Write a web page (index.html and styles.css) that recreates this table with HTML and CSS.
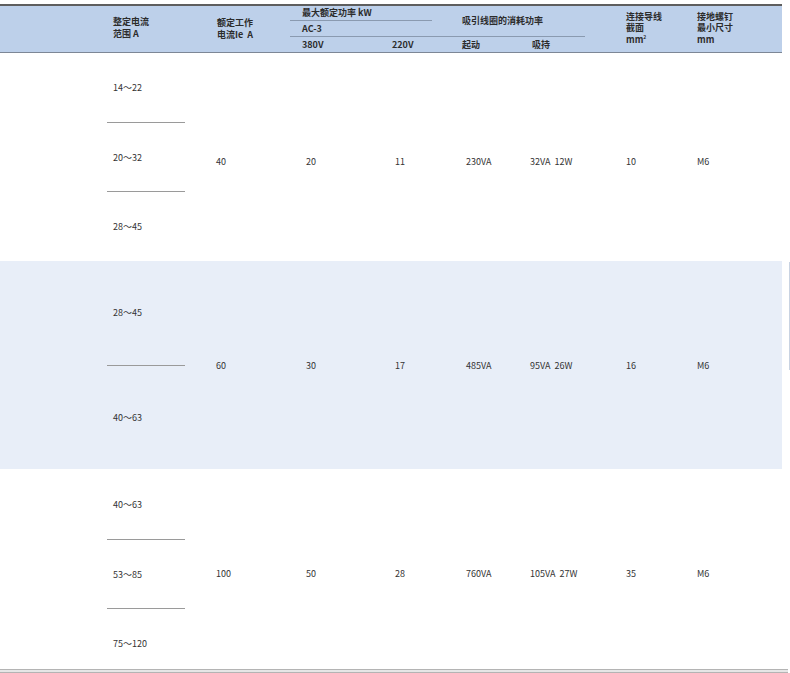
FILE: index.html
```html
<!DOCTYPE html>
<html lang="zh">
<head>
<meta charset="utf-8">
<link rel="stylesheet" href="styles.css">
</head>
<body>
<div class="page">
  <div class="thead">
    <div class="h h-c1">整定电流<br>范围 A</div>
    <div class="h h-c2">额定工作<br>电流Ie&nbsp; A</div>
    <div class="h h-kw">最大额定功率 kW</div>
    <div class="h h-ac">AC-3</div>
    <div class="h h-coil">吸引线圈的消耗功率</div>
    <div class="h h-380">380V</div>
    <div class="h h-220">220V</div>
    <div class="h h-qd">起动</div>
    <div class="h h-xc">吸持</div>
    <div class="h h-c7">连接导线<br>截面<br>mm<sup>2</sup></div>
    <div class="h h-c8">接地螺钉<br>最小尺寸<br>mm</div>
  </div>

  <div class="band band1">
    <div class="ranges">
      <div class="rg">14～22</div>
      <div class="rg">20～32</div>
      <div class="rg">28～45</div>
    </div>
    <div class="c c2">40</div>
    <div class="c c3">20</div>
    <div class="c c4">11</div>
    <div class="c c5">230VA</div>
    <div class="c c6">32VA&nbsp;&nbsp;12W</div>
    <div class="c c7">10</div>
    <div class="c c8">M6</div>
  </div>

  <div class="band band2">
    <div class="ranges">
      <div class="rg">28～45</div>
      <div class="rg">40～63</div>
    </div>
    <div class="c c2">60</div>
    <div class="c c3">30</div>
    <div class="c c4">17</div>
    <div class="c c5">485VA</div>
    <div class="c c6">95VA&nbsp;&nbsp;26W</div>
    <div class="c c7">16</div>
    <div class="c c8">M6</div>
  </div>

  <div class="band band3">
    <div class="ranges">
      <div class="rg">40～63</div>
      <div class="rg">53～85</div>
      <div class="rg rg-last">75～120</div>
    </div>
    <div class="c c2">100</div>
    <div class="c c3">50</div>
    <div class="c c4">28</div>
    <div class="c c5">760VA</div>
    <div class="c c6">105VA&nbsp;&nbsp;27W</div>
    <div class="c c7">35</div>
    <div class="c c8">M6</div>
  </div>

  <div class="foot"></div>
  <div class="edge"></div>
</div>
</body>
</html>
```

FILE: styles.css
```css
html, body {
  margin: 0;
  padding: 0;
  background: #ffffff;
}
body {
  width: 790px;
  height: 673px;
  overflow: hidden;
  font-family: "Noto Sans CJK SC", "Noto Sans", sans-serif;
  font-size: 9px;
  color: #333333;
}
.page {
  position: relative;
  padding-top: 4px;
}

/* shared column grid: spacer | range | Ie | 380V | 220V | start | hold | wire | screw */
.thead,
.band {
  display: grid;
  grid-template-columns: 107px 110px 85px 90px 70px 70px 94px 71px 1fr;
  width: 782px;
}

/* header */
.thead {
  background: #bdd0ea;
  border-top: 2px solid #5e5e5e;
  border-bottom: 1px solid #7d8796;
  padding-top: 1px;
  grid-template-rows: 14px 16px 15px;
  font-weight: bold;
  color: #2c2c2c;
  line-height: 12px;
}
.h {
  white-space: nowrap;
}
.h-c1 { grid-column: 2; grid-row: 1 / 4; align-self: center; padding-left: 6px; margin-top: -4px; }
.h-c2 { grid-column: 3; grid-row: 1 / 4; align-self: center; margin-top: -1px; }
.h-kw {
  grid-column: 4 / 7;
  grid-row: 1;
  justify-self: start;
  margin-left: -12px;
  padding-left: 12px;
  width: 130px;
  height: 13px;
  border-bottom: 1px solid #8a9ab0;
}
.h-ac {
  grid-column: 4 / 8;
  grid-row: 2;
  justify-self: start;
  margin-left: -12px;
  padding-left: 12px;
  width: 283px;
  height: 15px;
  line-height: 15px;
  border-bottom: 1px solid #8a9ab0;
}
.h-coil { grid-column: 6 / 8; grid-row: 1 / 3; align-self: center; margin-top: -3px; }
.h-380 { grid-column: 4; grid-row: 3; align-self: center; }
.h-220 { grid-column: 5; grid-row: 3; align-self: center; }
.h-qd  { grid-column: 6; grid-row: 3; align-self: center; }
.h-xc  { grid-column: 7; grid-row: 3; align-self: center; }
.h-c7 { grid-column: 8; grid-row: 1 / 4; align-self: center; line-height: 11.5px; margin-top: -3px; }
.h-c8 { grid-column: 9; grid-row: 1 / 4; align-self: center; line-height: 11.5px; margin-top: -3px; }
.h sup {
  font-size: 5px;
  line-height: 0;
  vertical-align: 4px;
}

/* body bands */
.band {
  grid-template-rows: 1fr;
  align-items: center;
}
.band1 { height: 208px; }
.band2 { height: 208px; background: #e8eef8; }
.band3 { height: 200px; }

.ranges {
  grid-column: 2;
  grid-row: 1;
  align-self: stretch;
  display: flex;
  flex-direction: column;
}
.rg {
  flex: 1 1 0;
  width: 78px;
  display: flex;
  align-items: center;
  padding-left: 6px;
  box-sizing: border-box;
}
.rg + .rg {
  border-top: 1px solid #9a9a9a;
}
.band1 .rg:first-child,
.band1 .rg:nth-child(2) { flex: 0 0 69px; }
.band3 .rg:first-child { flex: 0 0 70px; }
.band3 .rg:nth-child(2) { flex: 0 0 69px; }
.band3 .rg-last { padding-top: 8px; }

.c {
  grid-row: 1;
  white-space: nowrap;
}
.c2 { grid-column: 3; margin-left: -1px; }
.c3 { grid-column: 4; margin-left: 4px; }
.c4 { grid-column: 5; margin-left: 3px; }
.c5 { grid-column: 6; margin-left: 4px; }
.c6 { grid-column: 7; margin-left: -2px; }
.c7 { grid-column: 8; }
.c8 { grid-column: 9; }
.band1 .c { margin-top: 8px; }
.band3 .c { margin-top: 9px; }

.foot {
  width: 788px;
  height: 2px;
  border-top: 1px solid #b4b4b4;
  border-bottom: 1px solid #b4b4b4;
  background: #e6e6e6;
}
.edge {
  position: absolute;
  right: 0;
  top: 262px;
  width: 1px;
  height: 108px;
  background: #c9d3e2;
}
```
